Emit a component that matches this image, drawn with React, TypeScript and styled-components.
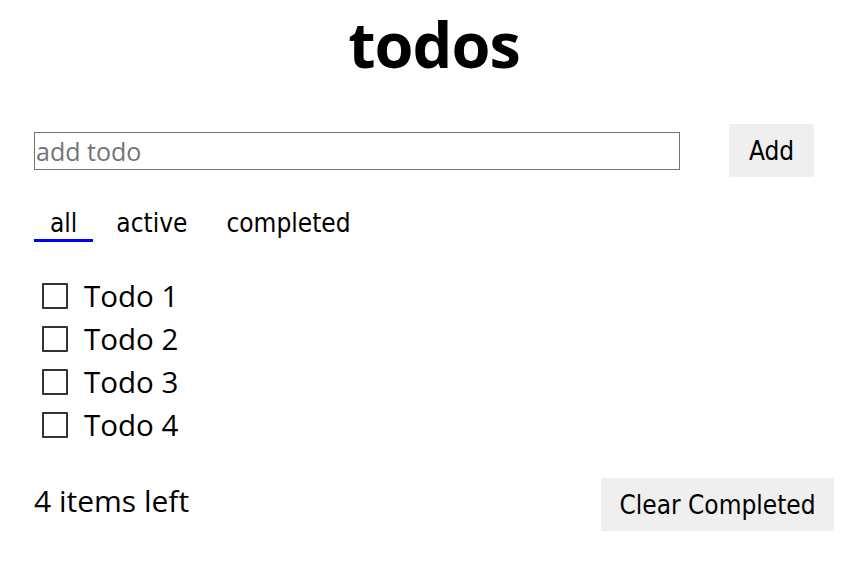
import React, { useState } from "react";
import styled, { createGlobalStyle } from "styled-components";

const Global = createGlobalStyle`
  html, body { margin: 0; padding: 0; background: #fff; }
  body { font-family: "Open Sans", "Noto Sans", sans-serif; color: #000; }
`;

const Page = styled.div`
  width: 800px;
  padding: 0 0 0 34px;
  box-sizing: content-box;
`;

const Title = styled.h1`
  margin: 0;
  padding-top: 2px;
  height: 88px;
  text-align: center;
  font-family: "Open Sans", sans-serif;
  font-weight: 700;
  font-size: 63px;
  line-height: 84px;
  letter-spacing: -1px;
`;

const AddRow = styled.div`
  display: flex;
  align-items: center;
  margin-top: 34px;
  height: 53px;
`;

const TodoInput = styled.input`
  width: 646px;
  height: 38px;
  box-sizing: border-box;
  border: 1px solid #767676;
  padding: 0 1px;
  font-family: "Open Sans", sans-serif;
  font-size: 25px;
  outline: none;
  &::placeholder { color: #757575; }
`;

const GreyButton = styled.button<{ $w: number }>`
  width: ${(p) => p.$w}px;
  height: 53px;
  border: none;
  background: #efefef;
  font-family: "DejaVu Sans Condensed", "Noto Sans", sans-serif;
  font-size: 26px;
  color: #000;
  padding: 0;
`;

const AddButton = styled(GreyButton)`
  margin-left: 49px;
`;

const Tabs = styled.div`
  display: flex;
  margin-top: 25px;
  height: 40px;
`;

const Tab = styled.button<{ $active?: boolean }>`
  border: none;
  background: none;
  padding: 3px 16px 0;
  margin-right: 7px;
  height: 40px;
  font-family: "DejaVu Sans Condensed", "Noto Sans", sans-serif;
  font-size: 26px;
  color: #000;
  border-bottom: 3px solid ${(p) => (p.$active ? "#0000ff" : "transparent")};
  box-sizing: border-box;
  line-height: 36px;
`;

const List = styled.ul`
  list-style: none;
  margin: 32px 0 0 0;
  padding: 0;
`;

const Item = styled.li`
  display: flex;
  align-items: center;
  height: 43px;
`;

const Box = styled.input`
  appearance: none;
  width: 26px;
  height: 26px;
  margin: 0 16px 0 8px;
  border: 2px solid #333;
  border-radius: 1px;
  box-sizing: border-box;
  background: #fff;
  &:checked { background: #0075ff; border-color: #0075ff; }
`;

const ItemText = styled.span`
  font-family: "Open Sans", sans-serif;
  font-size: 29.5px;
`;

const Footer = styled.div`
  display: flex;
  justify-content: space-between;
  align-items: center;
  margin-top: 32px;
`;

const Count = styled.span`
  font-family: "Open Sans", sans-serif;
  font-size: 30px;
  margin-top: -8px;
`;

export default function App() {
  const [todos, setTodos] = useState([
    { id: 1, text: "Todo 1", done: false },
    { id: 2, text: "Todo 2", done: false },
    { id: 3, text: "Todo 3", done: false },
    { id: 4, text: "Todo 4", done: false },
  ]);
  return (
    <Page>
      <Global />
      <Title>todos</Title>
      <AddRow>
        <TodoInput placeholder="add todo" />
        <AddButton $w={85}>Add</AddButton>
      </AddRow>
      <Tabs>
        <Tab $active>all</Tab>
        <Tab>active</Tab>
        <Tab>completed</Tab>
      </Tabs>
      <List>
        {todos.map((t) => (
          <Item key={t.id}>
            <Box
              type="checkbox"
              checked={t.done}
              onChange={() =>
                setTodos(todos.map((x) => (x.id === t.id ? { ...x, done: !x.done } : x)))
              }
            />
            <ItemText>{t.text}</ItemText>
          </Item>
        ))}
      </List>
      <Footer>
        <Count>{todos.filter((t) => !t.done).length} items left</Count>
        <GreyButton $w={233}>Clear Completed</GreyButton>
      </Footer>
    </Page>
  );
}
